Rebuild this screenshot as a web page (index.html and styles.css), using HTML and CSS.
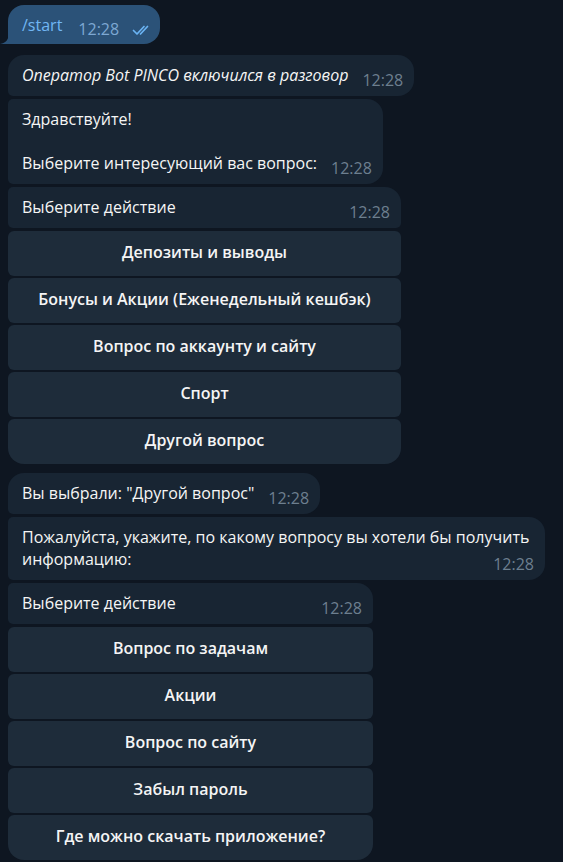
FILE: index.html
```html
<!DOCTYPE html>
<html>
    <head>
        <title>Bot PINCO</title>
        <link rel="stylesheet" href="styles.css">
    </head>
    <body>
        <div class="chat">

            <!-- outgoing command -->
            <div class="msg out">
                <svg class="tail" width="9" height="11" viewBox="0 0 9 11"><path d="M9 0 C9 6 6 10 0 11 H9 Z" fill="#2b5278"/></svg>
                <span class="cmd">/start</span>
                <span class="time">12:28
                    <svg class="checks" width="21" height="12" viewBox="0 0 21 12"><path d="M1.5 6.5 L5 10 L12 2.5 M8.5 10 L15.5 2.5" fill="none" stroke="#6ab3f3" stroke-width="1.7" stroke-linecap="round" stroke-linejoin="round"/></svg>
                </span>
            </div>

            <!-- first group from the bot -->
            <div class="group first-group">
                <div class="msg in top"><i>Оператор Bot PINCO включился в разговор</i><span class="time">12:28</span></div>
                <div class="msg in mid">Здравствуйте!<br><br>Выберите интересующий вас вопрос:<span class="time">12:28</span></div>
                <div class="keyboard-msg wide">
                    <div class="msg in mid has-kb">Выберите действие<span class="time">12:28</span></div>
                    <div class="kb-btn">Депозиты и выводы</div>
                    <div class="kb-btn">Бонусы и Акции (Еженедельный кешбэк)</div>
                    <div class="kb-btn">Вопрос по аккаунту и сайту</div>
                    <div class="kb-btn">Спорт</div>
                    <div class="kb-btn last">Другой вопрос</div>
                </div>
            </div>

            <!-- second group -->
            <div class="group">
                <div class="msg in top">Вы выбрали: "Другой вопрос"<span class="time">12:28</span></div>
                <div class="msg in mid">Пожалуйста, укажите, по какому вопросу вы хотели бы получить информацию:<span class="time">12:28</span></div>
                <div class="keyboard-msg narrow">
                    <div class="msg in mid has-kb">Выберите действие<span class="time">12:28</span></div>
                    <div class="kb-btn">Вопрос по задачам</div>
                    <div class="kb-btn">Акции</div>
                    <div class="kb-btn">Вопрос по сайту</div>
                    <div class="kb-btn">Забыл пароль</div>
                    <div class="kb-btn last">Где можно скачать приложение?</div>
                </div>
            </div>

        </div>
    </body>
</html>
```

FILE: styles.css
```css
body {
    margin: 0;
    background-color: #0e1621;
    font-family: "Open Sans", "Noto Sans", sans-serif;
    color: #f5f5f5;
    overflow: hidden;
}
.chat {
    display: flex;
    flex-direction: column;
    align-items: flex-start;
    padding: 5px 18px 0 8px;
}
.group {
    display: flex;
    flex-direction: column;
    align-items: flex-start;
    gap: 3px;
}
.first-group {
    margin-top: 11px;
}
.group + .group {
    margin-top: 9px;
}
.msg {
    position: relative;
    box-sizing: border-box;
    max-width: 537px;
    padding: 9px 11px 10px 14px;
    font-size: 16px;
    line-height: 22px;
    background-color: #182533;
    border-radius: 16px;
}
.msg::after {
    content: "";
    display: block;
    clear: both;
}
.time {
    float: right;
    position: relative;
    top: 7px;
    margin-left: 14px;
    font-size: 16px;
    line-height: 18px;
    color: #6d7f8f;
}
.out {
    padding: 9px 7px 8px 14px;
    background-color: #2b5278;
    border-bottom-left-radius: 0;
}
.out .time {
    color: #7da8d3;
    margin-left: 16px;
    top: 6px;
}
.tail {
    position: absolute;
    left: -8px;
    bottom: 0;
}
.cmd {
    color: #71b7f4;
}
.checks {
    margin-left: 9px;
    vertical-align: -1px;
}
.top {
    border-bottom-left-radius: 5px;
}
.mid {
    border-top-left-radius: 5px;
    border-bottom-left-radius: 5px;
}
.has-kb {
    border-bottom-right-radius: 5px;
    margin-bottom: 1px;
}
.keyboard-msg {
    display: flex;
    flex-direction: column;
    gap: 2px;
}
.keyboard-msg .msg {
    max-width: none;
}
.wide {
    width: 393px;
}
.narrow {
    width: 365px;
}
.kb-btn {
    box-sizing: border-box;
    height: 45px;
    padding-bottom: 3px;
    display: flex;
    align-items: center;
    justify-content: center;
    background-color: #1e2c3a;
    border-radius: 6px;
    font-size: 16px;
    font-weight: 600;
    color: #f5f5f5;
}
.kb-btn.last {
    border-bottom-left-radius: 16px;
    border-bottom-right-radius: 16px;
}
```
